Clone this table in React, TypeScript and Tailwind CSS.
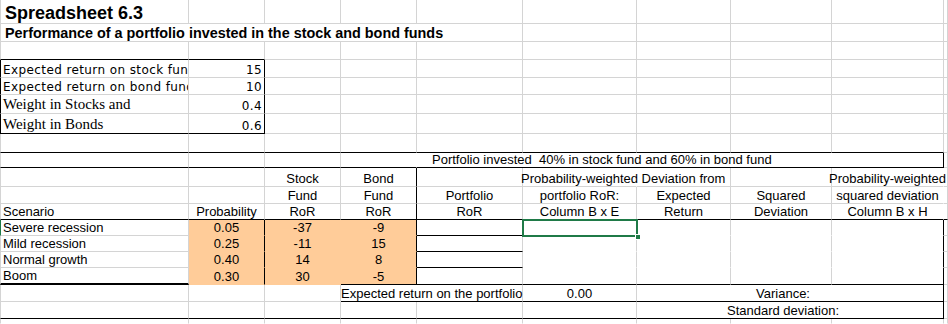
import React from 'react';

type Line = 'g' | 'k' | 'n' | 'k2';
type Left = 'g' | 'k' | 'e';
type Align = 'l' | 'c' | 'r';

interface Spec {
  t?: React.ReactNode;
  r?: Line;
  b?: Line;
  l?: Left;
  span?: number;
  a?: Align;
  c?: string;
  fill?: boolean;
  sel?: boolean;
}

const rightLine: Record<Line, string> = {
  g: 'border-r border-r-[#d4d4d4]',
  k: 'border-r border-r-black',
  n: 'border-r border-r-transparent',
  k2: 'border-r-2 border-r-black',
};

const bottomLine: Record<Line, string> = {
  g: 'border-b border-b-[#d4d4d4]',
  k: 'border-b border-b-black',
  n: 'border-b border-b-transparent',
  k2: 'border-b-2 border-b-black',
};

const leftLine: Record<Left, string> = {
  g: 'border-l border-l-[#d4d4d4]',
  k: 'border-l border-l-black',
  e: 'border-l border-l-[#1f7a47]',
};

const spans: Record<number, string> = { 1: '', 2: 'col-span-2', 3: 'col-span-3', 5: 'col-span-5' };
const aligns: Record<Align, string> = { l: 'justify-start', c: 'justify-center', r: 'justify-end' };

// fonts used in the input block
const verdana = "font-['DejaVu_Sans',Verdana,sans-serif] text-[12px] leading-[14px] tracking-[0.4px]";
const times = "font-['Liberation_Serif','Times_New_Roman',serif] text-[15px] leading-[14px] pb-[2px]";

function Cell({ s }: { s: Spec }) {
  const cls = [
    'relative flex items-end whitespace-nowrap min-w-0',
    rightLine[s.r ?? 'g'],
    bottomLine[s.b ?? 'g'],
    s.l ? leftLine[s.l] : '',
    spans[s.span ?? 1],
    aligns[s.a ?? 'l'],
    s.fill ? 'bg-[#ffcc99]' : '',
    s.c ?? '',
  ].join(' ');

  return (
    <div className={cls}>
      {s.t}
      {s.sel && (
        <div className="absolute left-[-1px] top-[-1px] right-[-2px] bottom-[-2px] border-2 border-[#1f7a47] z-10">
          <div className="absolute right-[-5px] bottom-[-5px] w-[6px] h-[6px] bg-[#1f7a47] border border-white" />
        </div>
      )}
    </div>
  );
}

const blanks = (n: number, s: Spec = {}): Spec[] => Array.from({ length: n }, () => ({ ...s }));

const scenarios = [
  { name: 'Severe recession', p: '0.05', stock: '-37', bond: '-9' },
  { name: 'Mild recession', p: '0.25', stock: '-11', bond: '15' },
  { name: 'Normal growth', p: '0.40', stock: '14', bond: '8' },
  { name: 'Boom', p: '0.30', stock: '30', bond: '-5' },
];

const rows: Spec[][] = [
  [{ t: 'Spreadsheet 6.3', l: 'g', c: 'font-bold text-[18px] leading-[18px] pl-[4px] pb-[1px]' }, ...blanks(9)],
  [
    {
      t: 'Performance of a portfolio invested in the stock and bond funds',
      span: 5,
      l: 'g',
      c: 'font-bold text-[14.4px] leading-[16px] pl-[4px]',
    },
    ...blanks(5),
  ],
  [{ l: 'g', b: 'k' }, { b: 'k' }, ...blanks(8)],
  [
    { t: 'Expected return on stock fund', l: 'k', c: verdana + ' overflow-hidden pl-[2px]' },
    { t: '15', r: 'k', a: 'r', c: verdana + ' pr-[2px]' },
    ...blanks(8),
  ],
  [
    { t: 'Expected return on bond fund', l: 'k', c: verdana + ' overflow-hidden pl-[2px]' },
    { t: '10', r: 'k', a: 'r', c: verdana + ' pr-[2px]' },
    ...blanks(8),
  ],
  [
    { t: 'Weight in Stocks and', l: 'k', c: times + ' pl-[2px]' },
    { t: '0.4', r: 'k', a: 'r', c: verdana + ' pr-[2px]' },
    ...blanks(8),
  ],
  [
    { t: 'Weight in Bonds', l: 'k', b: 'k', c: times + ' pl-[2px]' },
    { t: '0.6', r: 'k', b: 'k', a: 'r', c: verdana + ' pr-[2px]' },
    ...blanks(8),
  ],
  [{ l: 'g', b: 'k' }, ...blanks(8, { b: 'k' }), {}],
  [
    { l: 'g', b: 'k' },
    { b: 'k' },
    { b: 'k' },
    { b: 'k', r: 'n' },
    { t: 'Portfolio invested  40% in stock fund and 60% in bond fund', span: 5, r: 'k', b: 'k', c: 'pl-[15px] whitespace-pre' },
    {},
  ],
  [
    { l: 'g' },
    {},
    { t: 'Stock', a: 'c' },
    { t: 'Bond', a: 'c', r: 'k' },
    {},
    { t: 'Probability-weighted', a: 'c', r: 'n' },
    { t: 'Deviation from', a: 'c' },
    {},
    { t: 'Probability-weighted', a: 'c', r: 'n' },
    {},
  ],
  [
    { l: 'g' },
    {},
    { t: 'Fund', a: 'c' },
    { t: 'Fund', a: 'c', r: 'k' },
    { t: 'Portfolio', a: 'c' },
    { t: 'portfolio RoR:', a: 'c' },
    { t: 'Expected', a: 'c' },
    { t: 'Squared', a: 'c' },
    { t: 'squared deviation', a: 'c', r: 'n' },
    {},
  ],
  [
    { t: 'Scenario', l: 'g', b: 'k', c: 'pl-[2px]' },
    { t: 'Probability', a: 'c', b: 'k' },
    { t: 'RoR', a: 'c', b: 'k' },
    { t: 'RoR', a: 'c', b: 'k', r: 'k' },
    { t: 'RoR', a: 'c', b: 'k' },
    { t: 'Column B x E', a: 'c', b: 'k' },
    { t: 'Return', a: 'c', b: 'k' },
    { t: 'Deviation', a: 'c', b: 'k' },
    { t: 'Column B x H', a: 'c', b: 'k', r: 'n' },
    { b: 'k' },
  ],
  ...scenarios.map((s, i): Spec[] => {
    const last = i === scenarios.length - 1;
    return [
      { t: s.name, l: i === 0 ? 'e' : 'g', b: last ? 'k2' : 'g', c: 'pl-[2px]' },
      { t: s.p, a: 'c', fill: true, r: 'k', b: 'n' },
      { t: s.stock, a: 'c', fill: true, r: 'n', b: 'n' },
      { t: s.bond, a: 'c', fill: true, r: 'k', b: last ? 'k' : 'n' },
      { b: 'k' },
      { b: last ? 'k' : 'n', sel: i === 0 },
      { b: last ? 'k' : 'n' },
      { b: last ? 'k' : 'n' },
      { r: 'k', b: last ? 'k' : 'n' },
      {},
    ];
  }),
  [
    { l: 'g' },
    {},
    {},
    { t: 'Expected return on the portfolio', span: 2, b: 'k' },
    { t: '0.00', a: 'c', b: 'k' },
    { t: 'Variance:', span: 3, a: 'c', r: 'k', b: 'k', c: 'pr-[14px]' },
    {},
  ],
  [
    { l: 'g', b: 'k' },
    { b: 'k' },
    { b: 'k' },
    { b: 'k' },
    { b: 'k' },
    { b: 'k' },
    { t: 'Standard deviation:', span: 3, a: 'c', r: 'k', b: 'k', c: 'pr-[14px]' },
    {},
  ],
  [{ l: 'g', b: 'n' }, ...blanks(9, { b: 'n' })],
];

export default function App() {
  return (
    <div className="w-[948px] h-[324px] overflow-hidden bg-white text-black font-['Liberation_Sans',Arial,sans-serif] text-[13px] leading-[15px]">
      <div className="grid h-full grid-cols-[189px_76px_76px_76px_106px_114px_94px_101px_112px_4px] grid-rows-[24px_18px_18px_18px_17px_19px_20px_19px_15px_19px_17px_16px_16px_16px_16px_17px_17px_17px_1fr]">
        {rows.map((row, ri) =>
          row.map((s, ci) => <Cell key={`${ri}-${ci}`} s={s} />)
        )}
      </div>
    </div>
  );
}
